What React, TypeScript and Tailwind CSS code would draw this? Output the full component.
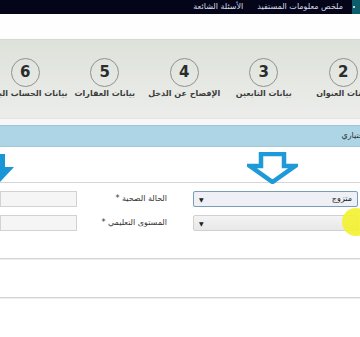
import React from "react";

const steps = [
  { n: 2, label: "بيانات العنوان" },
  { n: 3, label: "بيانات التابعين" },
  { n: 4, label: "الإفصاح عن الدخل" },
  { n: 5, label: "بيانات العقارات" },
  { n: 6, label: "بيانات الحساب البنكي" },
];

export default function App() {
  return (
    <div
      dir="rtl"
      className="relative w-[360px] h-[337px] overflow-hidden bg-white"
      style={{ fontFamily: '"DejaVu Sans", sans-serif' }}
    >
      {/* Top nav */}
      <div className="flex h-[14px] items-center bg-[#05051a] text-[#d8dde6] text-[8px]">
        <div className="h-full w-[8px] bg-[#0d5d6b] flex items-center justify-end">
          <span className="ml-[1px] w-[2px] h-[2px] rounded-full bg-white" />
        </div>
        <span className="mr-[9px] whitespace-nowrap">ملخص معلومات المستفيد</span>
        <span className="mr-[14px] whitespace-nowrap">الأسئلة الشائعة</span>
      </div>

      {/* White band */}
      <div className="h-[26px] bg-[#fdfefd] border-b border-[#d5d8d4]" />

      {/* Steps */}
      <div className="h-[78px] bg-gradient-to-b from-[#dde2da] to-[#ecedeb] flex overflow-hidden">
        <div className="flex shrink-0 -mr-[23px]">
          {steps.map((s) => (
            <div key={s.n} className="w-[79.5px] shrink-0 flex flex-col items-center pt-[18px]">
              <div className="w-[29px] h-[29px] rounded-full border border-[#8f928e] flex items-center justify-center text-[15px] font-bold text-[#2c2c2c]">
                {s.n}
              </div>
              <div className="mt-[1px] whitespace-nowrap text-[8px] font-bold text-[#3c3c3c]">
                {s.label}
              </div>
            </div>
          ))}
        </div>
      </div>

      <div className="h-[7px] bg-[#f6f7f6] border-t border-[#e4e6e3]" />

      {/* Blue info bar */}
      <div className="h-[22px] bg-[#add5e5] border-y border-[#9fc7d8] flex items-center text-[8px] text-[#333] overflow-hidden">
        <span className="-mr-[6px] whitespace-nowrap">إختياري</span>
      </div>

      {/* Arrow area */}
      <div className="relative h-[36px] border-b border-[#d6d6d6]">
        <svg className="absolute left-[247px] top-[5px]" width="51" height="32" viewBox="0 0 51 32">
          <path
            d="M14 2 H37 V14 H48 L25.5 30 L3 14 H14 Z"
            fill="white"
            stroke="#1e9ad8"
            strokeWidth="4.5"
            strokeLinejoin="miter"
          />
        </svg>
        <svg className="absolute left-[-12px] top-[7px]" width="26" height="30" viewBox="0 0 26 30">
          <path d="M7 0 H17 V13 H26 L12 28 L0 13 H7 Z" fill="#1a96d6" />
        </svg>
      </div>

      {/* Form rows */}
      <div className="pt-[8px] flex flex-col gap-[8px]">
        <div className="flex items-center h-[16px]">
          <div className="mr-[2px] w-[165px] h-[16px] rounded-[2px] border border-[#7b9cb6] bg-[#eef0f6] flex items-center justify-between px-[5px] text-[8px] text-[#222]">
            <span>متزوج</span>
            <span className="text-[6px]">▼</span>
          </div>
          <div className="w-[116px] pr-[26px] text-[8px] text-[#333] whitespace-nowrap">الحالة الصحية *</div>
          <div className="w-[77px] h-[16px] border border-[#d2d2d2] bg-[#f5f5f5]" />
        </div>
        <div className="flex items-center h-[16px]">
          <div className="mr-[2px] w-[165px] h-[16px] rounded-[2px] border border-[#d0d0d0] bg-gradient-to-b from-[#f3f3f3] to-[#e8e8e8] flex items-center justify-end px-[5px] text-[#222]">
            <span className="text-[6px]">▼</span>
          </div>
          <div className="w-[116px] pr-[26px] text-[8px] text-[#333] whitespace-nowrap">المستوى التعليمي *</div>
          <div className="w-[77px] h-[16px] border border-[#d2d2d2] bg-[#f5f5f5]" />
        </div>
      </div>

      <div className="mt-[27px] border-b border-[#d4d4d4] shadow-[0_1px_0_#eeeeee]" />
      <div className="mt-[38px] border-b border-[#d4d4d4] shadow-[0_1px_0_#eeeeee]" />

      {/* Cursor highlight */}
      <div className="absolute left-[342px] top-[208px] w-[28px] h-[28px] rounded-full bg-[#f3f230]/90" />
    </div>
  );
}
